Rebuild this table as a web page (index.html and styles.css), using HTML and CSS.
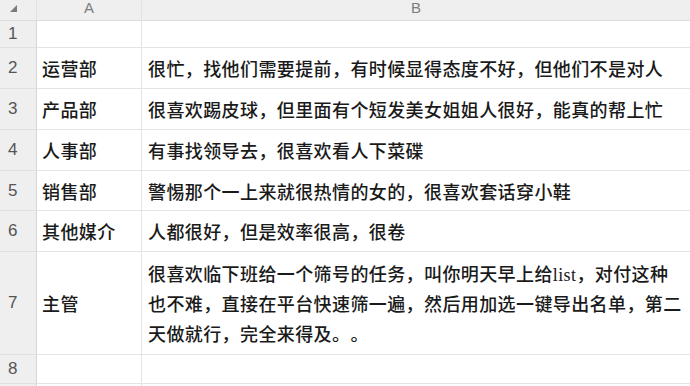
FILE: index.html
```html
<!DOCTYPE html>
<html lang="zh-CN">
<head>
<meta charset="utf-8">
<link rel="stylesheet" href="styles.css">
</head>
<body>
<div class="sheet">
  <div class="corner hdr">
    <svg class="tri" width="20" height="16" viewBox="0 0 20 16"><polygon points="10,12 17,5 17,12" fill="#7a7a7a"/></svg>
  </div>
  <div class="colhdr hdr">A</div>
  <div class="colhdr hdr last">B</div>

  <div class="rn">1</div><div class="cell"></div><div class="cell last"></div>
  <div class="rn">2</div><div class="cell">运营部</div><div class="cell last">很忙，找他们需要提前，有时候显得态度不好，但他们不是对人</div>
  <div class="rn">3</div><div class="cell">产品部</div><div class="cell last">很喜欢踢皮球，但里面有个短发美女姐姐人很好，能真的帮上忙</div>
  <div class="rn">4</div><div class="cell">人事部</div><div class="cell last">有事找领导去，很喜欢看人下菜碟</div>
  <div class="rn">5</div><div class="cell">销售部</div><div class="cell last">警惕那个一上来就很热情的女的，很喜欢套话穿小鞋</div>
  <div class="rn">6</div><div class="cell">其他媒介</div><div class="cell last">人都很好，但是效率很高，很卷</div>
  <div class="rn">7</div><div class="cell">主管</div><div class="cell last multi">很喜欢临下班给一个筛号的任务，叫你明天早上给list，对付这种<br>也不难，直接在平台快速筛一遍，然后用加选一键导出名单，第二<br>天做就行，完全来得及。。</div>
  <div class="rn">8</div><div class="cell"></div><div class="cell last"></div>
  <div class="rn"></div><div class="cell"></div><div class="cell last"></div>
</div>
</body>
</html>
```

FILE: styles.css
```css
* { box-sizing: border-box; }
html, body { margin: 0; padding: 0; background: #ffffff; }
body { width: 690px; height: 386px; overflow: hidden; }

.sheet {
  display: grid;
  grid-template-columns: 37px 105px 548px;
  grid-template-rows: 21px 27px 41px 41px 41px 40px 41px 103px 29px 20px;
}

.hdr {
  background: #efefef;
  border-bottom: 1px solid #dcdcdc;
  border-right: 1px solid #e2e2e2;
}
.corner { position: relative; }
.tri { position: absolute; left: 0; top: 0; }

.colhdr {
  font-family: "Liberation Sans", Arial, sans-serif;
  font-size: 15px;
  color: #7d7d7d;
  text-align: center;
  line-height: 16px;
}

.rn {
  background: #efefef;
  border-bottom: 1px solid #e0e0e0;
  border-right: 1px solid #d6d6d6;
  font-family: "Liberation Sans", Arial, sans-serif;
  font-size: 17px;
  color: #555555;
  padding-left: 8px;
  display: flex;
  align-items: center;
}

.cell {
  border-bottom: 1px solid #e4e4e4;
  border-right: 1px solid #e4e4e4;
  font-family: "Liberation Serif", "Noto Sans CJK SC", serif;
  font-size: 18px;
  font-weight: 500;
  letter-spacing: 0.4px;
  text-spacing-trim: space-all;
  color: #1a1a1a;
  padding-left: 5px;
  display: flex;
  align-items: center;
  white-space: nowrap;
}
.cell.last { border-right: none; padding-left: 6px; }
.cell.multi { line-height: 30px; padding-top: 4px; }
.hdr.last { border-right: none; }
```
